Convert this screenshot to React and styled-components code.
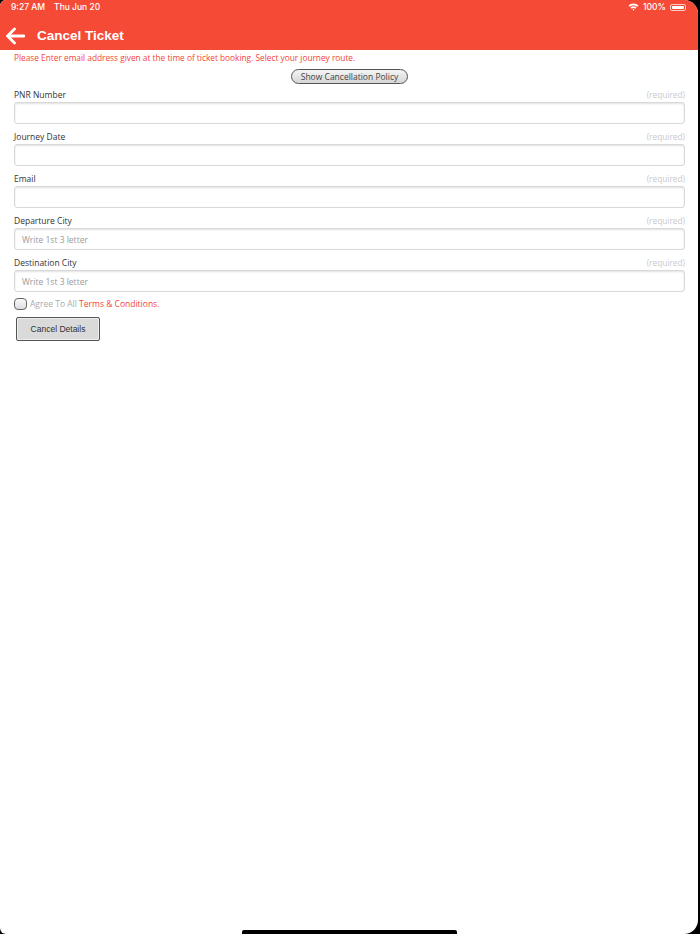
import React from "react";
import styled, { createGlobalStyle } from "styled-components";

const Global = createGlobalStyle`
  html, body { margin: 0; padding: 0; background: #000; }
  body { width: 700px; height: 934px; overflow: hidden; }
  #root { height: 934px; }
  * { box-sizing: border-box; }
`;

const Screen = styled.div`
  width: 698px;
  height: 934px;
  background: #fff;
  border-radius: 6px 14px 14px 6px;
  overflow: hidden;
  display: flex;
  flex-direction: column;
  position: relative;
`;

const Header = styled.div`
  background: #f54b36;
  height: 50px;
  display: flex;
  flex-direction: column;
  color: #fff;
`;

const StatusBar = styled.div`
  height: 14px;
  display: flex;
  align-items: center;
  justify-content: space-between;
  padding: 0 12px 0 11px;
  font-family: Inter, "Liberation Sans", Arial, sans-serif;
  font-size: 8.5px;
  font-weight: 500;
`;

const StatusLeft = styled.div`
  display: flex;
  gap: 9px;
`;

const StatusRight = styled.div`
  display: flex;
  align-items: center;
  gap: 4px;
`;

const Battery = styled.div`
  width: 16px;
  height: 7px;
  border: 1px solid rgba(255,255,255,0.7);
  border-radius: 2px;
  padding: 1px;
  &::before {
    content: "";
    display: block;
    width: 100%;
    height: 100%;
    background: #fff;
    border-radius: 1px;
  }
`;

const TitleRow = styled.div`
  flex: 1;
  display: flex;
  align-items: center;
  padding: 7px 0 0 5px;
  gap: 12px;
`;

const Title = styled.div`
  font-family: "Liberation Sans", Arial, sans-serif;
  font-weight: 700;
  font-size: 13.5px;
`;

const Body = styled.div`
  padding: 2px 13px 0 14px;
  font-family: "Open Sans", sans-serif;
  display: flex;
  flex-direction: column;
`;

const Notice = styled.div`
  color: #f4443a;
  font-size: 8.3px;
  line-height: 12px;
`;

const PolicyRow = styled.div`
  display: flex;
  justify-content: center;
  margin-top: 5px;
`;

const PillButton = styled.button`
  font-family: "Open Sans", sans-serif;
  font-size: 8.5px;
  color: #444;
  height: 15px;
  padding: 0 9px;
  border: 1px solid #555;
  border-radius: 8px;
  background: linear-gradient(#f4f4f4, #d6d6d6);
  line-height: 13px;
`;

const Field = styled.div`
  display: flex;
  flex-direction: column;
  margin-top: ${(p) => (p.$first ? "6px" : "8px")};
`;

const LabelRow = styled.div`
  display: flex;
  justify-content: space-between;
  align-items: center;
  height: 10px;
  line-height: 10px;
  margin-bottom: 2px;
`;

const Label = styled.span`
  font-size: 8.5px;
  color: #333;
`;

const Required = styled.span`
  font-size: 8.3px;
  color: #c9c9c9;
`;

const Input = styled.div`
  height: 22px;
  border: 1px solid #d8d8d8;
  border-radius: 3px;
  box-shadow: inset 0 1px 2px rgba(0,0,0,0.12);
  padding-left: 7px;
  display: flex;
  align-items: center;
  font-size: 8.5px;
  color: #9a9a9a;
`;

const AgreeRow = styled.div`
  display: flex;
  align-items: center;
  margin-top: 6px;
  font-size: 8.5px;
  line-height: 12px;
  gap: 3px;
`;

const Check = styled.div`
  width: 13px;
  height: 12px;
  border: 1px solid #666;
  border-radius: 4px;
  background: linear-gradient(#fafafa, #ddd);
`;

const Gray = styled.span`
  color: #aaa;
`;

const Red = styled.span`
  color: #f4443a;
`;

const CancelButton = styled.button`
  margin: 7px 0 0 2px;
  width: 84px;
  height: 24px;
  background: #dadada;
  border: 1px solid #555;
  border-radius: 2px;
  font-family: "Liberation Sans", Arial, sans-serif;
  font-size: 8.5px;
  color: #333;
  align-self: flex-start;
  box-shadow: inset 0 0 0 1px #eee;
`;

const HomeBar = styled.div`
  position: absolute;
  left: 242px;
  bottom: 0;
  width: 215px;
  height: 4px;
  border-radius: 2px 2px 0 0;
  background: #000;
`;

const fields = [
  { label: "PNR Number" },
  { label: "Journey Date" },
  { label: "Email" },
  { label: "Departure City", ph: "Write 1st 3 letter" },
  { label: "Destination City", ph: "Write 1st 3 letter" },
];

export default function App() {
  return (
    <>
      <Global />
      <Screen>
        <Header>
          <StatusBar>
            <StatusLeft>
              <span>9:27 AM</span>
              <span>Thu Jun 20</span>
            </StatusLeft>
            <StatusRight>
              <svg width="11" height="8" viewBox="0 0 11 8">
                <path d="M0.5 2.6 A7 7 0 0 1 10.5 2.6 L9.3 3.8 A5.3 5.3 0 0 0 1.7 3.8 Z" fill="#fff" />
                <path d="M2.5 4.6 A4.3 4.3 0 0 1 8.5 4.6 L7.3 5.8 A2.6 2.6 0 0 0 3.7 5.8 Z" fill="#fff" />
                <path d="M4.5 6.6 A1.4 1.4 0 0 1 6.5 6.6 L5.5 7.7 Z" fill="#fff" />
              </svg>
              <span>100%</span>
              <Battery />
            </StatusRight>
          </StatusBar>
          <TitleRow>
            <svg width="20" height="18" viewBox="0 0 20 18">
              <path d="M19 9 H3 M9.5 2 L2.5 9 L9.5 16" stroke="#fff" strokeWidth="2.8" fill="none" strokeLinecap="round" strokeLinejoin="round" />
            </svg>
            <Title>Cancel Ticket</Title>
          </TitleRow>
        </Header>
        <Body>
          <Notice>Please Enter email address given at the time of ticket booking. Select your journey route.</Notice>
          <PolicyRow>
            <PillButton>Show Cancellation Policy</PillButton>
          </PolicyRow>
          {fields.map((f, i) => (
            <Field key={f.label} $first={i === 0}>
              <LabelRow>
                <Label>{f.label}</Label>
                <Required>(required)</Required>
              </LabelRow>
              <Input>{f.ph || ""}</Input>
            </Field>
          ))}
          <AgreeRow>
            <Check />
            <span>
              <Gray>Agree To All </Gray>
              <Red>Terms &amp; Conditions.</Red>
            </span>
          </AgreeRow>
          <CancelButton>Cancel Details</CancelButton>
        </Body>
        <HomeBar />
      </Screen>
    </>
  );
}
